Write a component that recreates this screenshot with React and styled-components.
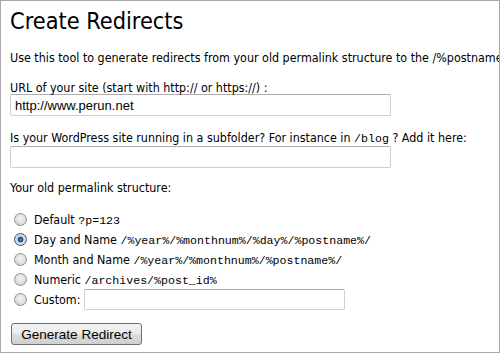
import React from "react";
import styled, { createGlobalStyle } from "styled-components";

const GlobalStyle = createGlobalStyle`
	html, body {
		margin: 0;
		padding: 0;
		background: #ffffff;
	}
`;

const Frame = styled.div`
	box-sizing: border-box;
	width: 500px;
	height: 353px;
	border: 1px solid #a8a8a8;
	overflow: hidden;
	padding: 0 0 0 9px;
	font-family: "DejaVu Sans Condensed", "Liberation Sans", sans-serif;
	font-size: 12.4px;
	color: #000;
	white-space: nowrap;
`;

const Title = styled.h1`
	margin: 6px 0 0 0;
	font-size: 23.3px;
	font-weight: 400;
	line-height: 28px;
`;

const Text = styled.p`
	margin: ${(p) => p.$mt || 0}px 0 0 0;
	line-height: 16px;
`;

const Code = styled.code`
	font-family: "Liberation Mono", monospace;
	font-size: 11.6px;
`;

const TextInput = styled.input`
	box-sizing: border-box;
	display: block;
	width: ${(p) => p.$width}px;
	height: 22px;
	margin: ${(p) => p.$mt || 0}px 0 0 0;
	padding: 0 4px;
	border: 1px solid #c9d0d8;
	border-top-color: #abadb3;
	border-radius: 2px;
	font-family: "Liberation Sans", Arial, sans-serif;
	font-size: 13px;
	color: #000;
	outline: none;
`;

const RadioList = styled.div`
	display: flex;
	flex-direction: column;
	margin-top: 13px;
`;

const RadioRow = styled.label`
	display: flex;
	align-items: center;
	height: 20px;
	padding-left: 4px;
	gap: 7px;
`;

const Radio = styled.input`
	appearance: none;
	box-sizing: border-box;
	width: 13px;
	height: 13px;
	margin: 0;
	border-radius: 50%;
	border: 1px solid #929292;
	background: radial-gradient(circle at 50% 40%, #f4f4f4 0%, #dcdcdc 60%, #c8c8c8 100%);
	flex: none;

	&:checked {
		background: radial-gradient(circle at 50% 50%, #2c8ad8 0%, #0c4f93 32%, #dcdcdc 42%, #c8c8c8 100%);
		border-color: #3a5a80;
	}
`;

const CustomInput = styled(TextInput)`
	width: 261px;
	height: 21px;
	margin-left: -3px;
`;

const Button = styled.button`
	display: block;
	box-sizing: border-box;
	width: 131px;
	height: 22px;
	margin: 14px 0 0 1px;
	padding: 0;
	border: 1px solid #707070;
	border-radius: 3px;
	background: linear-gradient(#f2f2f2 0%, #ebebeb 50%, #dddddd 50%, #cfcfcf 100%);
	font-family: "Liberation Sans", Arial, sans-serif;
	font-size: 13.5px;
	color: #000;
`;

const options = [
	{ label: "Default", code: "?p=123" },
	{ label: "Day and Name", code: "/%year%/%monthnum%/%day%/%postname%/", checked: true },
	{ label: "Month and Name", code: "/%year%/%monthnum%/%postname%/" },
	{ label: "Numeric", code: "/archives/%post_id%" },
];

export default function App() {
	return (
		<>
			<GlobalStyle />
			<Frame>
				<Title>Create Redirects</Title>
				<Text $mt={15}>
					Use this tool to generate redirects from your old permalink structure to the /%postname%/
				</Text>
				<Text $mt={14}>URL of your site (start with http:// or https://) :</Text>
				<TextInput $width={381} $mt={-2} defaultValue="http://www.perun.net" />
				<Text $mt={14}>
					Is your WordPress site running in a subfolder? For instance in <Code>/blog</Code> ? Add it here:
				</Text>
				<TextInput $width={381} $mt={-1} />
				<Text $mt={12}>Your old permalink structure:</Text>
				<RadioList>
					{options.map((o) => (
						<RadioRow key={o.label}>
							<Radio type="radio" name="structure" defaultChecked={o.checked} />
							<span>
								{o.label} <Code>{o.code}</Code>
							</span>
						</RadioRow>
					))}
					<RadioRow>
						<Radio type="radio" name="structure" />
						<span>Custom:</span>
						<CustomInput />
					</RadioRow>
				</RadioList>
				<Button>Generate Redirect</Button>
			</Frame>
		</>
	);
}
